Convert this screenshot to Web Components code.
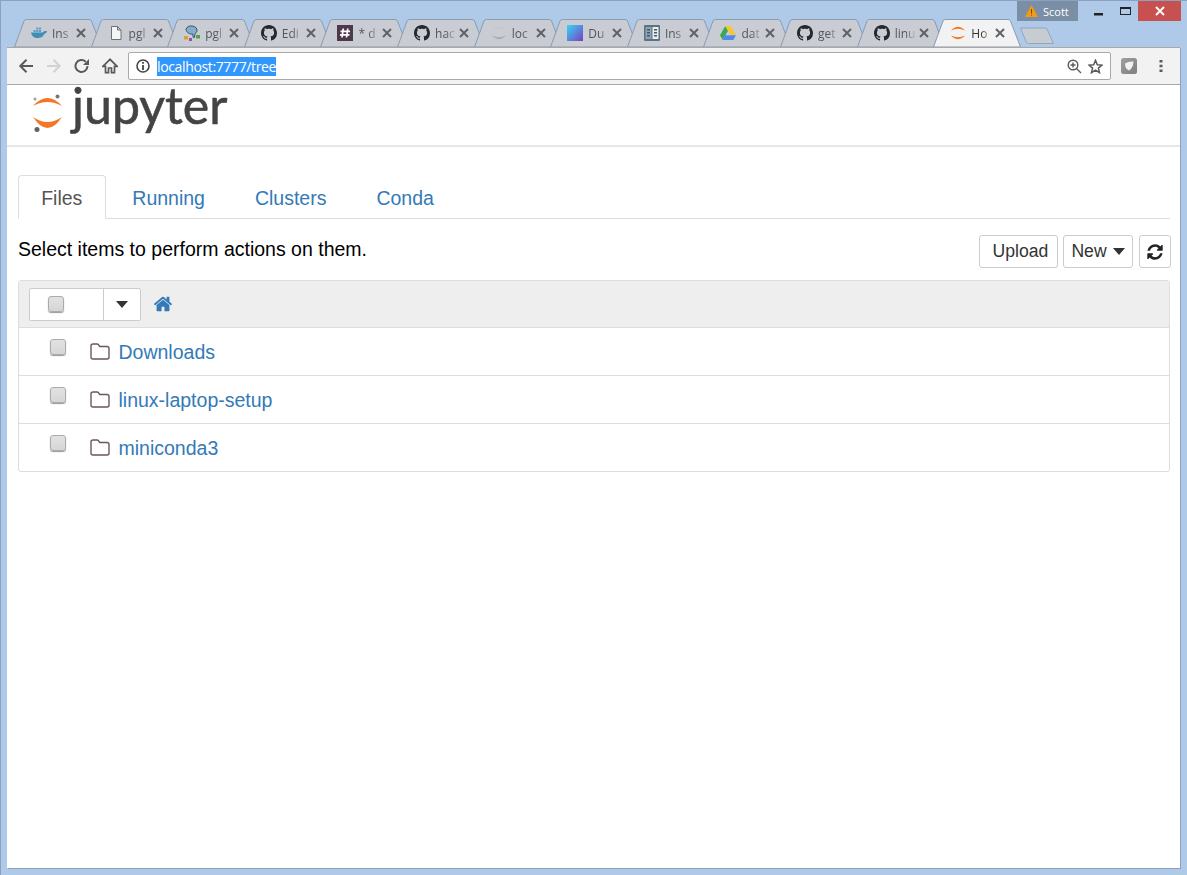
<!DOCTYPE html>
<html>
<head>
<meta charset="utf-8">
<title>Home</title>
<style>
  html, body { margin: 0; height: 100%; overflow: hidden; background: #aecae8; }
</style>
</head>
<body>
<browser-frame>
  <browser-tab slot="tabs" label="Ins">
    <svg slot="icon" viewBox="0 0 16 16" width="16" height="16"><path fill="#3d8fb8" d="M0 7.500h11.800c.6-1.400 2-2 4.200-1.200-.4 1.500-1.300 2.400-2.700 2.700C12 12 9.500 13 6.500 13 3 13 .6 11 0 7.500z"/><path fill="#5f9fc0" d="M2.500 5h2.200v2H2.500zM5.200 5h2.200v2H5.200zM7.900 5h2.200v2H7.900zM5.200 2.500h2.200v2H5.200zM7.900 2.500h2.200v2H7.900z"/></svg>
  </browser-tab>
  <browser-tab slot="tabs" label="pgl">
    <svg slot="icon" viewBox="0 0 16 16" width="16" height="16"><path fill="#f4f5f6" stroke="#6e7276" d="M3.500 1.500h6l3.500 3.500v9.500h-9.500z M9.500 1.500v3.500h3.500"/></svg>
  </browser-tab>
  <browser-tab slot="tabs" label="pgl">
    <svg slot="icon" viewBox="0 0 16 16" width="16" height="16"><path fill="#86adc8" stroke="#33556f" d="M2 4.500C2.500 1.500 6 .5 8.500 1c3 .5 5 2.500 4.500 5-.3 1.500-1.500 2-2 3-.3 1-.3 3-1 4-1.200-.5-1.200-2.500-1.200-4C6.500 9.500 2.500 8 2 4.500z"/><rect x="0" y="11" width="4" height="3.500" fill="#d8a23a"/><rect x="12" y="10" width="4" height="3.500" fill="#4fa34f"/><rect x="5" y="13" width="3" height="3" fill="#a050a0"/></svg>
  </browser-tab>
  <browser-tab slot="tabs" label="Edi"><github-mark slot="icon"></github-mark></browser-tab>
  <browser-tab slot="tabs" label="* d">
    <svg slot="icon" viewBox="0 0 16 16" width="16" height="16"><rect width="16" height="16" fill="#4d394b"/><path fill="none" stroke="#fff" stroke-width="1.700" d="M6.300 3.500 5 12.500M10.800 3.500 9.500 12.500M3.500 6.300h9.500M3 9.800h9.500"/></svg>
  </browser-tab>
  <browser-tab slot="tabs" label="hac"><github-mark slot="icon"></github-mark></browser-tab>
  <browser-tab slot="tabs" label="loc">
    <svg slot="icon" viewBox="0 0 16 16" width="16" height="16"><path fill="#c4c6c9" d="M1 5.500Q8-2 15 5.500 8 2 1 5.500z"/><path fill="#a9acaf" d="M1 10.500Q8 18 15 10.500 8 14 1 10.500z"/></svg>
  </browser-tab>
  <browser-tab slot="tabs" label="Du">
    <svg slot="icon" viewBox="0 0 16 16" width="16" height="16"><defs><linearGradient id="du" x1="0" y1="0" x2="1" y2="1"><stop offset="0" stop-color="#35d6f5"/><stop offset="1" stop-color="#7b3fc0"/></linearGradient></defs><rect width="16" height="16" fill="url(#du)"/></svg>
  </browser-tab>
  <browser-tab slot="tabs" label="Ins">
    <svg slot="icon" viewBox="0 0 16 16" width="16" height="16"><rect width="16" height="16" rx="1" fill="#5b7282"/><path fill="#e8eef2" d="M8.500 2h6v12h-6z"/><path fill="#8fa3b1" d="M1.500 2h6v12h-6z"/><path fill="#46596a" d="M3 4h3v1.500H3zM3 7h3v1.500H3zM3 10h3v1.500H3zM10 4h3v1.500h-3zM10 7h3v1.500h-3zM10 10h3v1.500h-3z"/></svg>
  </browser-tab>
  <browser-tab slot="tabs" label="dat">
    <svg slot="icon" viewBox="0 0 16 16" width="16" height="16"><path fill="#3aa757" d="M5.300 1 0 10.300l2.700 4.700L8 5.700z"/><path fill="#f8c630" d="M5.300 1h5.400L16 10.300h-5.300z"/><path fill="#4c8bf5" d="M2.700 15h10.600L16 10.300H5.300z"/></svg>
  </browser-tab>
  <browser-tab slot="tabs" label="get"><github-mark slot="icon"></github-mark></browser-tab>
  <browser-tab slot="tabs" label="linu"><github-mark slot="icon"></github-mark></browser-tab>
  <browser-tab slot="tabs" label="Ho" active>
    <svg slot="icon" viewBox="0 0 16 16" width="16" height="16"><path fill="#f37726" d="M1 5.500Q8-2 15 5.500 8 2 1 5.500z"/><path fill="#f37726" d="M1 10.500Q8 18 15 10.500 8 14 1 10.500z"/></svg>
  </browser-tab>

  <caption-bar slot="caption"></caption-bar>
  <browser-toolbar slot="toolbar" url="localhost:7777/tree"></browser-toolbar>

  <jupyter-tree>
    <tree-row name="Downloads"></tree-row>
    <tree-row name="linux-laptop-setup"></tree-row>
    <tree-row name="miniconda3"></tree-row>
  </jupyter-tree>
</browser-frame>

<script>
const frameTemplate = document.createElement('template');
frameTemplate.innerHTML = `
<style>
  :host{
    display: block;
    box-sizing: border-box;
    width: 1187px;
    height: 875px;
    padding: 0 6px 6px 6px;
    background: #aecae8;
    border-top: 1px solid #8aa2bf;
    border-left: 1px solid #8aa2bf;
    font-family: "Liberation Sans", Arial, sans-serif;
  }
  .strip{
    display: grid;
    height: 46px;
    margin: 0 -6px 0 -6px;
  }
  .tabs{
    grid-area: 1 / 1;
    display: flex;
    align-items: flex-start;
    padding: 18px 0 0 13px;
  }
  .newtab{
    flex: none;
    margin: 8px 0 0 9px;
  }
  .caption{
    grid-area: 1 / 1;
    justify-self: end;
    align-self: start;
  }
  .window{
    display: flex;
    flex-direction: column;
    height: 821px;
    width: 1173px;
    background: #fff;
    box-shadow: 1px 1px 0 #8aa2bf;
  }
</style>
<div class="strip">
  <div class="tabs">
    <slot name="tabs"></slot>
    <svg class="newtab" width="36" height="18" viewBox="0 0 36 18"><path d="M1.500 1h24.500q1.500 0 2.300 1.600L34.500 16.500H9.500q-1.500 0-2.300-1.500z" fill="#c7ccd3" stroke="#8fa6c1"/></svg>
  </div>
  <div class="caption"><slot name="caption"></slot></div>
</div>
<div class="window">
  <slot name="toolbar"></slot>
  <slot></slot>
</div>
`;

class BrowserFrame extends HTMLElement {
  constructor() {
    super();
    this.attachShadow({ mode: 'open' }).appendChild(frameTemplate.content.cloneNode(true));
  }
}

const tabTemplate = document.createElement('template');
tabTemplate.innerHTML = `
<style>
  :host{
    display: block;
    position: relative;
    flex: none;
    width: 88px;
    height: 28px;
    margin-right: -11.4px;
    font-family: "Open Sans", "Noto Sans", sans-serif;
    font-size: 12px;
    color: #50565c;
  }
  :host([active]){
    z-index: 2;
    color: #333;
  }
  .shape{
    position: absolute;
    left: 0;
    top: 0;
  }
  .shape path{
    fill: #c9cdd3;
    stroke: #8a9bb0;
  }
  :host([active]) .shape path{
    fill: #f2f2f2;
  }
  .row{
    position: relative;
    display: flex;
    align-items: center;
    height: 100%;
    padding: 0 0 0 17px;
    box-sizing: border-box;
  }
  .icon{
    display: flex;
    width: 16px;
    height: 16px;
  }
  .label{
    width: 23px;
    margin-left: 5px;
    overflow: hidden;
    white-space: nowrap;
    -webkit-mask-image: linear-gradient(90deg, #000 45%, transparent 95%);
  }
  .close{
    margin-left: 1px;
  }
</style>
<svg class="shape" width="88" height="28" viewBox="0 0 88 28"><path d="M.5 28 10 2q.7-1.500 2.500-1.500H75q1.800 0 2.500 1.500L87.500 28z"/></svg>
<div class="row">
  <span class="icon"><slot name="icon"></slot></span>
  <span class="label"></span>
  <svg class="close" width="10" height="10" viewBox="0 0 10 10"><path d="M1 1l8 8M9 1l-8 8" stroke="#5f6368" stroke-width="2"/></svg>
</div>
`;

class BrowserTab extends HTMLElement {
  constructor() {
    super();
    this.attachShadow({ mode: 'open' }).appendChild(tabTemplate.content.cloneNode(true));
  }

  connectedCallback() {
    this.shadowRoot.querySelector('.label').textContent = this.getAttribute('label');
  }
}

class GithubMark extends HTMLElement {
  constructor() {
    super();
    this.attachShadow({ mode: 'open' }).innerHTML = `
      <style>:host{ display: block; width: 16px; height: 16px; }</style>
      <svg width="16" height="16" viewBox="0 0 16 16"><path fill="#24292e" d="M8 0C3.580 0 0 3.580 0 8c0 3.540 2.290 6.530 5.470 7.590.4.070.55-.17.55-.38 0-.19-.01-.82-.01-1.490-2.010.37-2.530-.49-2.690-.94-.09-.23-.48-.94-.82-1.130-.28-.15-.68-.52-.01-.53.63-.01 1.080.58 1.230.82.72 1.210 1.870.87 2.330.66.07-.52.28-.87.51-1.070-1.780-.2-3.640-.89-3.640-3.950 0-.87.31-1.590.82-2.150-.08-.2-.36-1.020.08-2.120 0 0 .67-.21 2.200.82.64-.18 1.320-.27 2-.27.68 0 1.360.09 2 .27 1.530-1.040 2.200-.82 2.200-.82.44 1.100.16 1.920.08 2.120.51.56.82 1.270.82 2.150 0 3.070-1.870 3.750-3.650 3.950.29.25.54.73.54 1.480 0 1.070-.01 1.930-.01 2.200 0 .21.15.46.55.38A8.013 8.013 0 0016 8c0-4.420-3.580-8-8-8z"/></svg>`;
  }
}

const captionTemplate = document.createElement('template');
captionTemplate.innerHTML = `
<style>
  :host{
    display: flex;
    align-items: flex-start;
    font-family: "Open Sans", "Noto Sans", sans-serif;
    margin-right: 6px;
  }
  .profile{
    display: flex;
    align-items: center;
    box-sizing: border-box;
    width: 61px;
    height: 20px;
    padding-left: 8px;
    gap: 5px;
    background: #7a8ea5;
    color: #fff;
    font-size: 11px;
  }
  .btn{
    display: flex;
    align-items: center;
    justify-content: center;
    height: 20px;
  }
  .min{ width: 35px; margin-left: 3px; }
  .max{ width: 19px; }
  .x{ width: 43px; margin-left: 3px; background: #c75050; }
</style>
<div class="profile">
  <svg width="13" height="12" viewBox="0 0 13 12"><path d="M6.500 0 13 12H0z" fill="#f59a10"/><path d="M6 4h1v4.500H6zM6 9.500h1v1H6z" fill="#7a4a00"/></svg>
  <span>Scott</span>
</div>
<div class="btn min"><svg width="9" height="3" viewBox="0 0 9 3" style="margin-top:6px"><rect width="9" height="2.500" fill="#222"/></svg></div>
<div class="btn max"><svg width="11" height="8" viewBox="0 0 11 8"><rect x=".5" y=".5" width="10" height="7" fill="none" stroke="#222"/><rect width="11" height="2" fill="#222"/></svg></div>
<div class="btn x"><svg width="10" height="10" viewBox="0 0 10 10"><path d="M1 1l8 8M9 1l-8 8" stroke="#fff" stroke-width="1.800"/></svg></div>
`;

class CaptionBar extends HTMLElement {
  constructor() {
    super();
    this.attachShadow({ mode: 'open' }).appendChild(captionTemplate.content.cloneNode(true));
  }
}

const toolbarTemplate = document.createElement('template');
toolbarTemplate.innerHTML = `
<style>
  :host{
    display: flex;
    flex: none;
    align-items: center;
    box-sizing: border-box;
    height: 38px;
    padding: 0 0 0 11px;
    background: #f2f2f2;
    border-top: 1px solid #a8a8a8;
    border-bottom: 1px solid #a8a8a8;
  }
  svg{ display: block; flex: none; }
  .nav{ margin-right: 12px; }
  .omni{
    display: flex;
    align-items: center;
    box-sizing: border-box;
    width: 983px;
    height: 28px;
    margin-left: -2px;
    padding: 0 7px 0 7px;
    background: #fff;
    border: 1px solid #a9a9a9;
    border-radius: 2px;
    font-family: "Open Sans", "Noto Sans", sans-serif;
    font-size: 14px;
  }
  .url{
    margin-left: 7px;
    background: #3297fd;
    color: #fff;
    line-height: 19px;
    letter-spacing: -.36px;
  }
  .end{ margin-left: auto; display: flex; gap: 6px; align-items: center; }
  .ext{ margin-left: 10px; }
  .menu{ margin-left: 22px; }
</style>
<svg class="nav" width="16" height="16" viewBox="0 0 16 16"><path d="M15 8H2.500M8.500 1.800 2.300 8l6.200 6.200" fill="none" stroke="#5a5a5a" stroke-width="2"/></svg>
<svg class="nav" width="16" height="16" viewBox="0 0 16 16"><path d="M1 8h12.500M7.500 1.800 13.700 8l-6.200 6.200" fill="none" stroke="#d2d2d2" stroke-width="2"/></svg>
<svg class="nav" width="16" height="16" viewBox="0 0 16 16"><path d="M13.500 8a6 6 0 1 1-1.800-4.300" fill="none" stroke="#5a5a5a" stroke-width="2"/><path d="M15 1v6H9z" fill="#5a5a5a"/></svg>
<svg class="nav" width="16" height="16" viewBox="0 0 16 16"><path d="M8 1.300.9 8.300h2.600v6.400h3V10h3v4.700h3V8.300h2.600z" fill="none" stroke="#5a5a5a" stroke-width="1.700"/></svg>
<div class="omni">
  <svg width="14" height="14" viewBox="0 0 14 14"><circle cx="7" cy="7" r="6" fill="none" stroke="#444" stroke-width="1.600"/><path d="M6.100 3h1.800v1.700H6.100zM6.100 6h1.800v5H6.100z" fill="#444"/></svg>
  <span class="url"></span>
  <div class="end">
    <svg width="15" height="15" viewBox="0 0 15 15"><circle cx="6" cy="6" r="4.800" fill="none" stroke="#5a5a5a" stroke-width="1.400"/><path d="M9.500 9.500 14 14M3.500 6h5M6 3.500v5" fill="none" stroke="#5a5a5a" stroke-width="1.400"/></svg>
    <svg width="15" height="15" viewBox="0 0 15 15"><path d="M7.500 1.300 9.300 5.700l4.700.4-3.600 3 1.100 4.600-4-2.500-4 2.500 1.100-4.600L1 6.100l4.700-.4z" fill="none" stroke="#5a5a5a" stroke-width="1.500"/></svg>
  </div>
</div>
<svg class="ext" width="16" height="16" viewBox="0 0 16 16"><defs><linearGradient id="ex" x1="0" y1="0" x2="1" y2="1"><stop offset="0" stop-color="#a0a0a0"/><stop offset="1" stop-color="#7e7e7e"/></linearGradient></defs><rect width="16" height="16" rx="2.500" fill="url(#ex)"/><path d="M4 5.500Q8 3 12.500 3.500 12 10 8 12.500 4 11 4 5.500z" fill="#f2f2f2"/></svg>
<svg class="menu" width="4" height="14" viewBox="0 0 4 14"><path d="M.5 1h3v2.500h-3zM.5 5.800h3v2.500h-3zM.5 10.500h3V13h-3z" fill="#5a5a5a"/></svg>
`;

class BrowserToolbar extends HTMLElement {
  constructor() {
    super();
    this.attachShadow({ mode: 'open' }).appendChild(toolbarTemplate.content.cloneNode(true));
  }

  connectedCallback() {
    this.shadowRoot.querySelector('.url').textContent = this.getAttribute('url');
  }
}

class TreeCheck extends HTMLElement {
  constructor() {
    super();
    this.attachShadow({ mode: 'open' }).innerHTML = `
      <style>
        :host{
          display: block;
          box-sizing: border-box;
          width: 16px;
          height: 16px;
          border-radius: 3px;
          border: 1px solid #ababab;
          background: linear-gradient(#e2e2e2, #d6d6d6);
          box-shadow: 0 1px 1px #9a9a9a;
        }
      </style>`;
  }
}

const treeTemplate = document.createElement('template');
treeTemplate.innerHTML = `
<style>
  :host{
    display: block;
    flex: 1;
    padding: 0 10px 0 11px;
    color: #000;
    font-family: "Liberation Sans", Arial, sans-serif;
    font-size: 19.5px;
  }
  svg{ display: block; }
  .masthead{
    display: flex;
    align-items: flex-start;
    height: 60px;
    margin: 0 -10px 0 -11px;
    border-bottom: 2px solid #e7e7e7;
  }
  .logo{ margin: 7px 0 0 21px; }
  .wordmark{
    margin: 0 0 0 4px;
    font-family: Lato, "Open Sans", sans-serif;
    font-size: 50px;
    line-height: 40px;
    letter-spacing: 0;
    color: #444;
    -webkit-text-stroke: .6px #444;
  }
  .tabs{
    display: flex;
    margin-top: 28px;
    height: 43px;
    border-bottom: 1px solid #ddd;
  }
  .tabs a{
    box-sizing: border-box;
    height: 44px;
    padding: 0 22.2px;
    margin-right: 3.6px;
    line-height: 44px;
    color: #337ab7;
    border: 1px solid transparent;
    border-radius: 4px 4px 0 0;
  }
  .tabs a.on{
    color: #555;
    background: #fff;
    border-color: #ddd #ddd #fff;
  }
  .actions{
    display: flex;
    align-items: center;
    height: 33px;
    margin: 16px -1px 12px 0;
  }
  .actions .hint{ margin-right: auto; position: relative; top: -2px; }
  .btn{
    display: flex;
    align-items: center;
    justify-content: center;
    box-sizing: border-box;
    height: 33px;
    background: #fff;
    border: 1px solid #ccc;
    border-radius: 3px;
    font-size: 17.6px;
    color: #333;
  }
  .upload{ width: 79px; padding-left: 4px; }
  .new{ width: 70px; margin-left: 5px; gap: 6px; }
  .refresh{ width: 32px; margin-left: 6px; }
  .panel{
    border: 1px solid #ddd;
    border-radius: 3px;
    overflow: hidden;
  }
  .head{
    display: flex;
    align-items: center;
    box-sizing: border-box;
    height: 47px;
    padding-left: 10px;
    background: #eee;
    border-bottom: 1px solid #ddd;
  }
  .group{
    display: flex;
    box-sizing: border-box;
    height: 33px;
    background: #fff;
    border: 1px solid #ccc;
    border-radius: 2px;
  }
  .group .left{
    display: flex;
    align-items: center;
    width: 74px;
    padding-left: 18px;
    box-sizing: border-box;
    border-right: 1px solid #ccc;
  }
  .group .right{
    display: flex;
    align-items: center;
    justify-content: center;
    width: 36px;
  }
  .home{ margin-left: 12px; margin-top: 0; }
</style>
<div class="masthead">
  <svg class="logo" width="40" height="44" viewBox="28 92 40 44">
    <path fill="#f37726" d="M33 106Q47.500 90 62 106 47.500 98 33 106z"/>
    <path fill="#f37726" d="M33 117Q47.500 139 62 117 47.500 127 33 117z"/>
    <circle cx="57.500" cy="96.500" r="2" fill="#767677"/>
    <circle cx="35" cy="99" r="1.500" fill="#9e9e9e"/>
    <circle cx="37" cy="129.500" r="2.500" fill="#616262"/>
  </svg>
  <span class="wordmark">jupyter</span>
</div>
<div class="tabs">
  <a class="on">Files</a><a>Running</a><a>Clusters</a><a>Conda</a>
</div>
<div class="actions">
  <span class="hint">Select items to perform actions on them.</span>
  <div class="btn upload">Upload</div>
  <div class="btn new">New <svg width="12" height="7" viewBox="0 0 12 7"><path d="M0 0h12L6 7z" fill="#333"/></svg></div>
  <div class="btn refresh"><svg width="18" height="18" viewBox="0 0 1792 1792"><path fill="#222" d="M1639 1056q0 5-1 7-64 268-268 434.500t-478 166.500q-146 0-282.500-55t-243.500-157l-129 129q-19 19-45 19t-45-19-19-45v-448q0-26 19-45t45-19h448q26 0 45 19t19 45-19 45l-137 137q71 66 161 102t187 36q134 0 250-65t186-179q11-17 53-117 8-23 30-23h192q13 0 22.500 9.500t9.500 22.500zm25-800v448q0 26-19 45t-45 19h-448q-26 0-45-19t-19-45 19-45l138-138q-148-137-349-137-134 0-250 65t-186 179q-11 17-53 117-8 23-30 23h-199q-13 0-22.500-9.500t-9.500-22.500v-7q65-268 270-434.500t480-166.500q146 0 284 55.500t245 156.500l130-129q19-19 45-19t45 19 19 45z"/></svg></div>
</div>
<div class="panel">
  <div class="head">
    <div class="group">
      <div class="left"><tree-check></tree-check></div>
      <div class="right"><svg width="12" height="7" viewBox="0 0 12 7"><path d="M0 0h12L6 7z" fill="#333"/></svg></div>
    </div>
    <svg class="home" width="20" height="20" viewBox="0 0 1792 1792"><path fill="#337ab7" d="M1472 992v480q0 26-19 45t-45 19h-384v-384h-256v384h-384q-26 0-45-19t-19-45v-480q0-1 .5-3t.5-3l575-474 575 474q1 2 1 6zm223-69l-62 74q-8 9-21 11h-3q-13 0-21-7l-692-577-692 577q-12 8-24 7-13-2-21-11l-62-74q-8-10-7-23.500t11-21.500l719-599q32-26 76-26t76 26l244 204v-195q0-14 9-23t23-9h192q14 0 23 9t9 23v408l219 182q10 8 11 21.500t-7 23.500z"/></svg>
  </div>
  <slot></slot>
</div>
`;

class JupyterTree extends HTMLElement {
  constructor() {
    super();
    this.attachShadow({ mode: 'open' }).appendChild(treeTemplate.content.cloneNode(true));
  }
}

const rowTemplate = document.createElement('template');
rowTemplate.innerHTML = `
<style>
  :host{
    display: flex;
    align-items: center;
    box-sizing: border-box;
    height: 48px;
    padding-left: 31px;
    border-bottom: 1px solid #ddd;
  }
  :host(:last-child){
    border-bottom: 0;
    height: 47px;
  }
  tree-check{ margin-top: -9px; }
  svg{ margin-left: 24px; flex: none; margin-top: -1px; }
  a{ margin-left: 8.500px; margin-top: 2px; color: #337ab7; }
</style>
<tree-check></tree-check>
<svg width="20" height="17" viewBox="0 0 20 17"><path d="M3 1h4q1 0 1.600.8L9.800 3.500H17q2 0 2 2V14q0 2-2 2H3q-2 0-2-2V3q0-2 2-2z" fill="none" stroke="#6a5558" stroke-width="1.400"/></svg>
<a></a>
`;

class TreeRow extends HTMLElement {
  constructor() {
    super();
    this.attachShadow({ mode: 'open' }).appendChild(rowTemplate.content.cloneNode(true));
  }

  connectedCallback() {
    this.shadowRoot.querySelector('a').textContent = this.getAttribute('name');
  }
}

customElements.define('tree-check', TreeCheck);
customElements.define('github-mark', GithubMark);
customElements.define('browser-tab', BrowserTab);
customElements.define('caption-bar', CaptionBar);
customElements.define('browser-toolbar', BrowserToolbar);
customElements.define('tree-row', TreeRow);
customElements.define('jupyter-tree', JupyterTree);
customElements.define('browser-frame', BrowserFrame);
</script>
</body>
</html>
